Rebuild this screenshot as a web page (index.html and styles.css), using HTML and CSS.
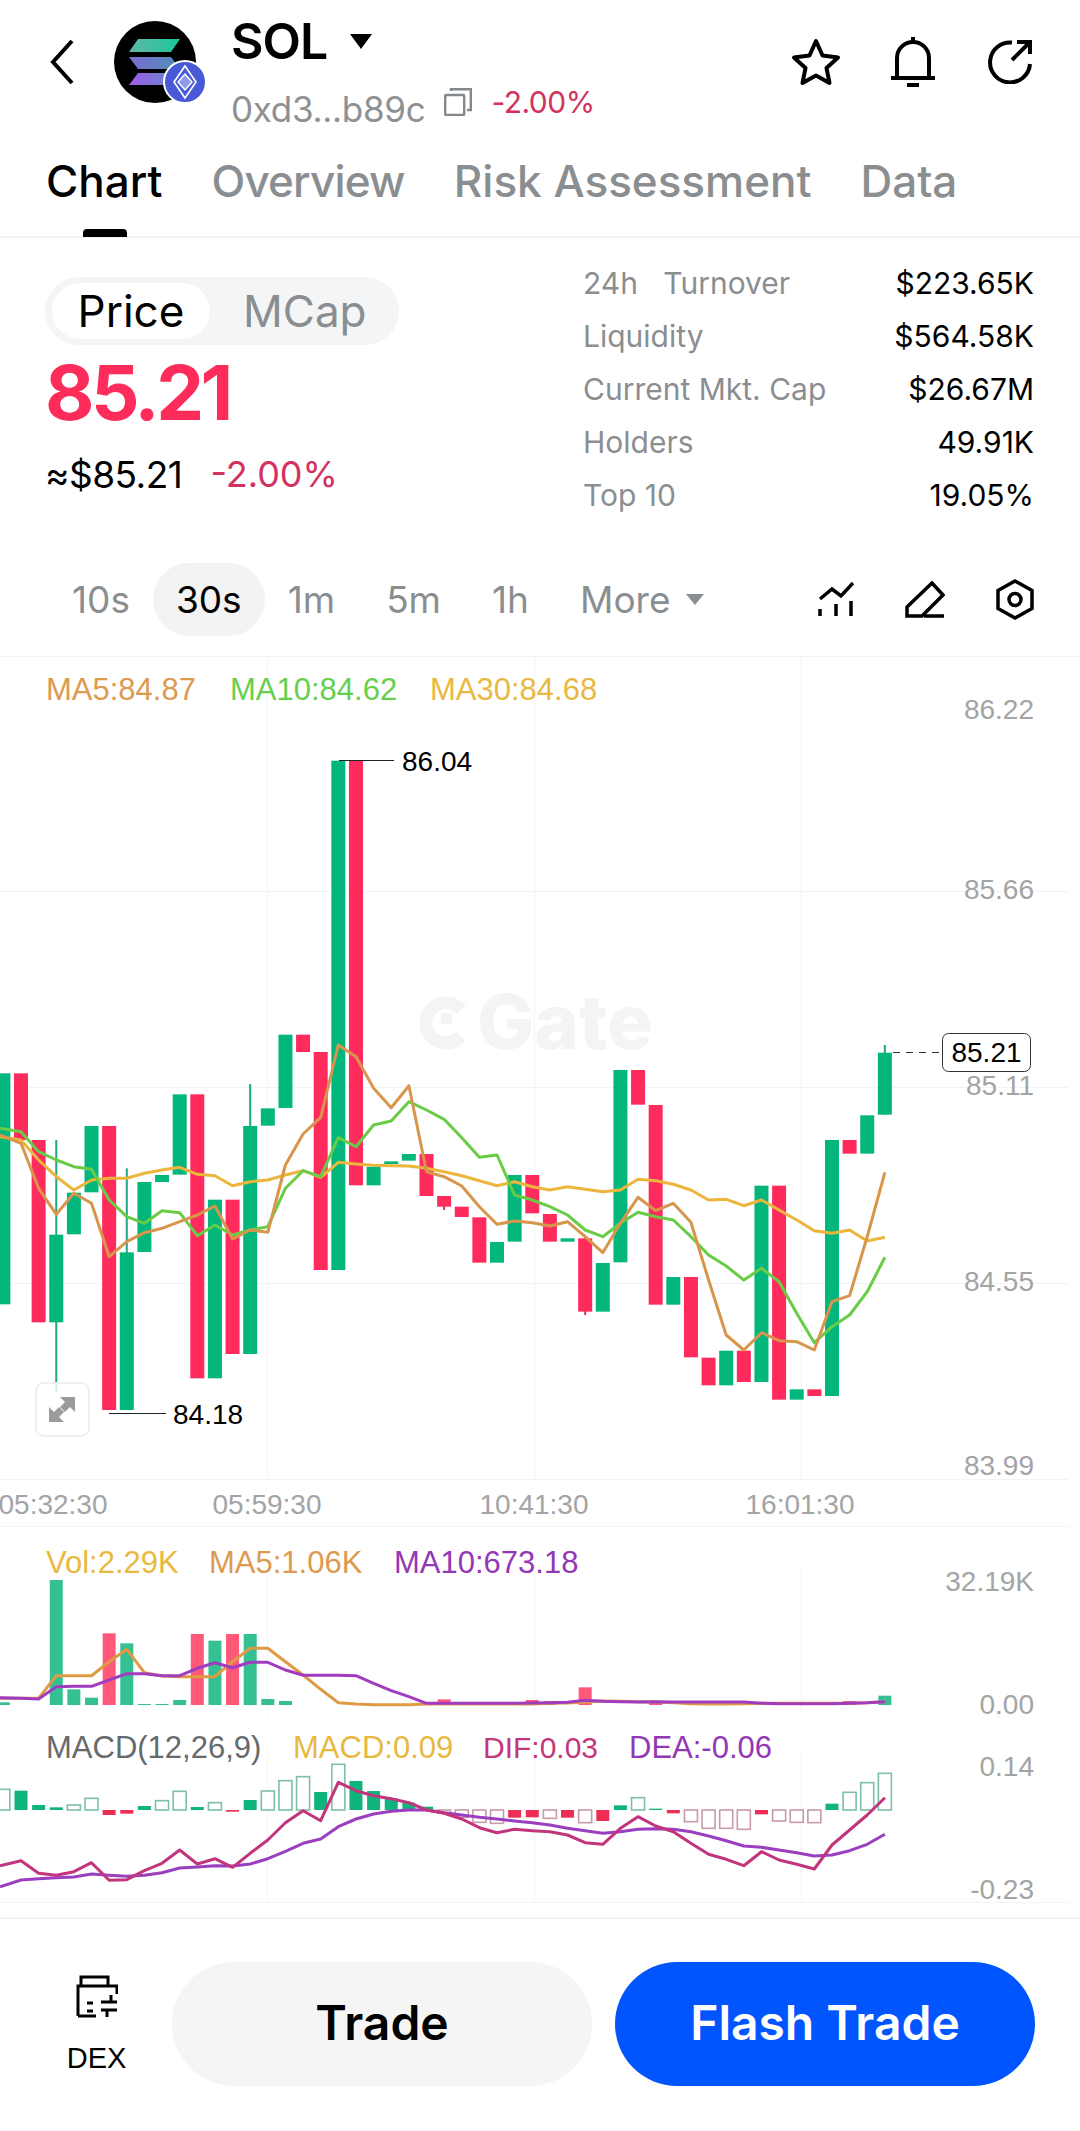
FILE: index.html
```html
<!DOCTYPE html>
<html lang="en">
<head>
<meta charset="utf-8">
<title>SOL Chart</title>
<link rel="stylesheet" href="styles.css">
</head>
<body>
<div class="app">
  <header class="header">
    <svg class="back" viewBox="0 0 24 46"><path d="M22 2 L3 23 L22 44"/></svg>
    <div class="logo">
      <svg class="sol" viewBox="0 0 82 82">
        <defs>
          <linearGradient id="solA" x1="0" y1="0" x2="1" y2="0"><stop offset="0" stop-color="#5fb7a8"/><stop offset="1" stop-color="#1cc79d"/></linearGradient>
          <linearGradient id="solB" x1="0" y1="0" x2="1" y2="0"><stop offset="0" stop-color="#7d6bd0"/><stop offset="1" stop-color="#4d8fb8"/></linearGradient>
          <linearGradient id="solC" x1="0" y1="0" x2="1" y2="0"><stop offset="0" stop-color="#a15be8"/><stop offset="1" stop-color="#5a8fc8"/></linearGradient>
        </defs>
        <circle cx="41" cy="41" r="41" fill="#000"/>
        <path d="M24 18 H66 L57 31 H15 Z" fill="url(#solA)"/>
        <path d="M15 36 H57 L66 48 H24 Z" fill="url(#solB)"/>
        <path d="M24 52 H66 L57 64 H15 Z" fill="url(#solC)"/>
      </svg>
      <svg class="eth" viewBox="0 0 44 44">
        <circle cx="22" cy="22" r="21" fill="#4a5ad6" stroke="#fff" stroke-width="2"/>
        <path d="M22 6 L33 22 L22 38 L11 22 Z" fill="none" stroke="#fff" stroke-width="1.6"/>
        <path d="M22 14 L29 22 L22 30 L15 22 Z" fill="#8f9ae8" stroke="#fff" stroke-width="1.4"/>
      </svg>
    </div>
    <div class="title">
      <div class="symbol"><span>SOL</span><i class="caret-big"></i></div>
      <div class="meta">
        <span class="addr">0xd3...b89c</span>
        <svg class="copy" viewBox="0 0 28 28"><rect x="1.2" y="7" width="19" height="20" rx="1"/><path d="M7 3 V1.2 H26.8 V22 H23"/></svg>
        <span class="pct-small">-2.00%</span>
      </div>
    </div>
    <div class="actions">
      <svg class="ic-star" viewBox="0 0 50 48"><path d="M25 3 L31.5 17.5 L47 19.5 L35.5 30 L38.5 45 L25 37.5 L11.5 45 L14.5 30 L3 19.5 L18.5 17.5 Z"/></svg>
      <svg class="ic-bell" viewBox="0 0 44 50"><path d="M22 0 V5 M6 41 V21 a16 16 0 0 1 32 0 V41 M0 41 H44 M16 48 H28"/></svg>
      <svg class="ic-share" viewBox="0 0 44 44"><path d="M24 2.5 A20 20 0 1 0 42 24 M24 20 L41 3 M29 2 H42 V14"/></svg>
    </div>
  </header>

  <nav class="tabs">
    <span class="tab active">Chart</span>
    <span class="tab tight">Overview</span>
    <span class="tab">Risk Assessment</span>
    <span class="tab">Data</span>
  </nav>

  <section class="summary">
    <div class="quote">
      <div class="toggle"><span class="opt on">Price</span><span class="opt">MCap</span></div>
      <div class="big">85.21</div>
      <div class="sub"><span class="usd">≈$85.21</span><span class="pct">-2.00%</span></div>
    </div>
    <dl class="stats">
      <div class="row"><dt>24h&nbsp;&nbsp; Turnover</dt><dd>$223.65K</dd></div>
      <div class="row"><dt>Liquidity</dt><dd>$564.58K</dd></div>
      <div class="row"><dt>Current Mkt. Cap</dt><dd>$26.67M</dd></div>
      <div class="row"><dt>Holders</dt><dd>49.91K</dd></div>
      <div class="row"><dt>Top 10</dt><dd>19.05%</dd></div>
    </dl>
  </section>

  <div class="timebar">
    <span class="tf">10s</span>
    <span class="tf sel">30s</span>
    <span class="tf">1m</span>
    <span class="tf spaced">5m</span>
    <span class="tf spaced">1h</span>
    <span class="tf spaced more">More<i class="caret-small"></i></span>
    <div class="tools">
      <svg class="tool-a" viewBox="0 0 36 35"><path d="M2 17 L14 7 L23 14 L35 1 M2 27 V34 M18 22 V34 M33 19 V34"/></svg>
      <svg class="tool-b" viewBox="0 0 40 37"><path d="M2 35 V26 L27 2 L38 14 L17 35 Z M19 35 H39"/></svg>
      <svg class="tool-c" viewBox="0 0 38 41"><path d="M19 2 L36 11.5 V29.5 L19 39 L2 29.5 V11.5 Z"/><circle cx="19" cy="20.5" r="6"/></svg>
    </div>
  </div>

  <div class="chart">
    <svg class="canvas" viewBox="0 656 1080 1261">
      <g class="grid">
        <path d="M0 656.5 H1080"/>
        <path d="M0 891.5 H1068 M0 1087.5 H1068 M0 1283.5 H1068 M0 1479.5 H1068 M0 1526.5 H1068 M0 1902.5 H1068"/>
        <path d="M267.5 656 V1479 M534.5 656 V1479 M801.5 656 V1479"/>
        <path d="M267.5 1568 V1715 M534.5 1568 V1715 M801.5 1568 V1715 M267.5 1753 V1902 M534.5 1753 V1902 M801.5 1753 V1902"/>
      </g>
      <g class="watermark">
        <path class="wm-ring" d="M461 1010 A20 20 0 1 0 461 1036"/>
        <rect x="441" y="1013" width="11" height="11"/>
        <text x="477" y="1049">Gate</text>
      </g>
      <g id="candles"></g>
      <g id="lines"></g>
      <g id="volume"></g>
      <g id="macd"></g>

      <g class="legend">
        <text class="c-ma5" x="46" y="700">MA5:84.87</text>
        <text class="c-ma10" x="230" y="700">MA10:84.62</text>
        <text class="c-ma30" x="430" y="700">MA30:84.68</text>
        <text class="c-ma30" x="46" y="1573">Vol:2.29K</text>
        <text class="c-ma5" x="209" y="1573">MA5:1.06K</text>
        <text class="c-pur" x="394" y="1573">MA10:673.18</text>
        <text class="c-grey" x="46" y="1758">MACD(12,26,9)</text>
        <text class="c-ma30" x="293" y="1758">MACD:0.09</text>
        <text class="c-dif" x="483" y="1758">DIF:0.03</text>
        <text class="c-pur" x="629" y="1758">DEA:-0.06</text>
      </g>

      <g class="axis right">
        <text x="1034" y="719">86.22</text>
        <text x="1034" y="899">85.66</text>
        <text x="1034" y="1095">85.11</text>
        <text x="1034" y="1291">84.55</text>
        <text x="1034" y="1475">83.99</text>
        <text x="1034" y="1591">32.19K</text>
        <text x="1034" y="1714">0.00</text>
        <text x="1034" y="1776">0.14</text>
        <text x="1034" y="1899">-0.23</text>
      </g>
      <g class="axis mid">
        <text x="53" y="1514">05:32:30</text>
        <text x="267" y="1514">05:59:30</text>
        <text x="534" y="1514">10:41:30</text>
        <text x="800" y="1514">16:01:30</text>
      </g>

      <g class="marks">
        <path class="lead" d="M339 760.5 H394 M109 1413.5 H166"/>
        <path class="dash" d="M893 1052.5 H942"/>
        <text x="402" y="771">86.04</text>
        <text x="173" y="1424">84.18</text>
        <rect class="pricebox" x="942.5" y="1033.5" width="88" height="38" rx="6"/>
        <text class="boxt" x="986.5" y="1062">85.21</text>
      </g>

      <g class="expand">
        <rect x="36" y="1383" width="53" height="53" rx="8"/>
        <path d="M60 1397 H75 V1412 L70 1407 L65 1412 L60 1407 L65 1402 Z M64 1422 H49 V1407 L54 1412 L59 1407 L64 1412 L59 1417 Z"/>
      </g>
    </svg>
  </div>

  <footer class="footer">
    <div class="dex">
      <svg viewBox="0 0 42 43"><path d="M5 11 V2 H32 V11 M2 41 V11 H41 V19 M2 41 H20 M11 28 H17 M11 36 H17 M25 27 H41 M35 20 V27 M25 35 H41 M31 35 V42"/></svg>
      <span>DEX</span>
    </div>
    <button class="btn ghost">Trade</button>
    <button class="btn primary">Flash Trade</button>
  </footer>
</div>
<script src="chart.js"></script>
</body>
</html>
```

FILE: styles.css
```css
* { box-sizing: border-box; }
html, body { margin: 0; padding: 0; background: #fff; }
body { font-family: Inter, "Liberation Sans", sans-serif; color: #000; }
.app { width: 1080px; height: 2131px; overflow: hidden; display: flex; flex-direction: column; }

/* header */
.header { height: 124px; flex: none; display: flex; align-items: center; padding: 0 48px 0 50px; }
.back { width: 24px; height: 46px; flex: none; }
.back path { fill: none; stroke: #000; stroke-width: 4; }
.logo { width: 92px; height: 82px; margin-left: 40px; flex: none; position: relative; }
.sol { width: 82px; height: 82px; display: block; }
.eth { position: absolute; left: 49px; top: 39px; width: 44px; height: 44px; }
.title { align-self: flex-start; margin: 11px 0 0 25px; }
.symbol { display: flex; align-items: center; height: 60px; font-size: 50px; font-weight: 600; letter-spacing: -1px; }
.caret-big { width: 0; height: 0; margin: 0 0 0 23px; border-left: 11px solid transparent; border-right: 11px solid transparent; border-top: 15px solid #000; }
.meta { display: flex; align-items: center; height: 50px; margin-top: 6px; }
.addr { font-size: 35px; color: #8e9192; letter-spacing: -.3px; margin-top: 14px; }
.copy { width: 28px; height: 28px; margin: 0 0 0 19px; flex: none; }
.copy rect, .copy path { fill: none; stroke: #85888a; stroke-width: 2.4; }
.pct-small { margin: 0 0 0 19px; font-size: 30px; color: #d2325f; letter-spacing: -.5px; }
.actions { margin-left: auto; display: flex; align-items: center; gap: 50px; }
.actions svg { display: block; fill: none; stroke: #000; }
.ic-star { width: 50px; height: 48px; stroke-width: 4; stroke-linejoin: round; }
.ic-bell { width: 44px; height: 50px; stroke-width: 4; }
.ic-share { width: 44px; height: 44px; stroke-width: 4; margin-left: 3px; }

/* tabs */
.tabs { height: 114px; flex: none; display: flex; gap: 49px; padding: 27px 0 0 46px; border-bottom: 2px solid #f2f3f3; }
.tab { font-size: 44px; font-weight: 500; line-height: 60px; color: #8b8e90; height: 60px; }
.tab.tight { letter-spacing: -.8px; }
.tab.active { color: #000; position: relative; }
.tab.active::after { content: ""; position: absolute; left: 37px; top: 78px; width: 44px; height: 8px; border-radius: 4px 4px 0 0; background: #000; }

/* summary */
.summary { height: 325px; flex: none; display: flex; justify-content: space-between; padding: 0 46px 0 45px; }
.quote { padding-top: 39px; }
.toggle { width: 354px; height: 68px; border-radius: 34px; background: #f3f5f6; padding: 6px 0 6px 7px; display: flex; align-items: center; font-size: 44px; color: #8a8e90; }
.opt { height: 56px; line-height: 56px; }
.opt.on { width: 158px; text-align: center; background: #fff; border-radius: 28px; color: #000; margin-right: 33px; }
.big { margin: 7px 0 0; height: 80px; line-height: 80px; font-size: 76px; font-weight: 700; color: #fe2c5b; letter-spacing: -3.5px; }
.sub { margin: 17px 0 0; height: 50px; display: flex; align-items: center; gap: 28px; font-size: 36px; }
.usd { font-size: 37px; letter-spacing: -.5px; }
.pct { color: #d2325f; }
.stats { margin: 19px 0 0; width: 451px; }
.row { display: flex; justify-content: space-between; height: 53px; line-height: 53px; font-size: 30px; }
.row dt { color: #8b8e90; }
.row dd { margin: 0; color: #000; }

/* timebar */
.timebar { height: 93px; flex: none; display: flex; align-items: flex-start; padding: 0 46px 0 49px; font-size: 37px; color: #8b8e90; }
.tf { height: 73px; line-height: 73px; padding: 0 23px; border-radius: 37px; }
.tf.sel { background: #f3f3f3; color: #000; }
.tf.spaced { margin-left: 5px; }
.more { display: flex; align-items: center; }
.caret-small { width: 0; height: 0; margin-left: 16px; border-left: 9px solid transparent; border-right: 9px solid transparent; border-top: 11px solid #8b8e90; }
.tools { margin-left: auto; display: flex; align-items: center; gap: 51px; height: 73px; }
.tools svg { display: block; fill: none; stroke: #000; stroke-width: 3.5; }
.tool-a { width: 36px; height: 35px; }
.tool-b { width: 40px; height: 37px; }
.tool-c { width: 38px; height: 41px; }

/* chart */
.chart { height: 1261px; flex: none; }
.canvas { display: block; width: 1080px; height: 1261px; font-family: "Liberation Sans", Arial, sans-serif; }
.grid path { fill: none; stroke: #f2f3f4; stroke-width: 1; }
.watermark { fill: #f3f5f5; }
.watermark text { font-family: Inter, sans-serif; font-size: 76px; font-weight: 800; }
.wm-ring { fill: none; stroke: #f3f5f5; stroke-width: 13; }
.legend text { font-size: 31px; }
.legend .c-dif { font-size: 30px; }
.c-ma5 { fill: #dd9a4f; }
.c-ma10 { fill: #66cf4e; }
.c-ma30 { fill: #e9b93f; }
.c-pur { fill: #9338b4; }
.c-grey { fill: #666a6c; }
.c-dif { fill: #c4377c; }
.axis text { font-size: 28px; fill: #a2a4a5; }
.axis.right text { text-anchor: end; }
.axis.mid text { text-anchor: middle; }
.marks text { font-size: 28px; fill: #000; }
.marks .boxt { text-anchor: middle; }
.lead { fill: none; stroke: #222; stroke-width: 1; }
.dash { fill: none; stroke: #333; stroke-width: 1; stroke-dasharray: 7 6; }
.pricebox { fill: #fff; stroke: #333; stroke-width: 1; }
.expand rect { fill: #fff; fill-opacity: .8; stroke: #efefef; stroke-width: 2; }
.expand path { fill: #9b9b9b; }

/* candles and indicator series */
.up { fill: #03b67c; }
.down { fill: #ff2b5c; }
.wick { stroke: #20a585; stroke-width: 2; }
.wick.red { stroke: #d8355f; }
.ln { fill: none; stroke-width: 3; stroke-linejoin: round; }
.ln-ma5 { stroke: #d8964c; }
.ln-ma10 { stroke: #69cc46; }
.ln-ma30 { stroke: #ecb53b; }
.ln-vol { stroke: #a13cc0; }
.ln-volma { stroke: #e09a45; }
.ln-dif { stroke: #c2357d; }
.ln-dea { stroke: #9a3fc0; }
.vol-up { fill: #34c092; }
.vol-down { fill: #ff5878; }
.m-up { fill: #0fb37d; }
.m-down { fill: #ee2d55; }
.m-up-h { fill: #fff; fill-opacity: .7; stroke: #7cbfa9; stroke-width: 1.6; }
.m-down-h { fill: #fff; fill-opacity: .7; stroke: #c89aa8; stroke-width: 1.6; }

/* footer */
.footer { flex: 1; border-top: 2px solid #f2f3f3; display: flex; align-items: flex-start; padding: 43px 45px 0 67px; }
.dex { width: 59px; margin-right: 46px; display: flex; flex-direction: column; align-items: center; padding-top: 13px; font-family: "Liberation Sans", sans-serif; font-size: 29px; line-height: 34px; }
.dex svg { display: block; width: 42px; height: 43px; margin-bottom: 23px; fill: none; stroke: #000; stroke-width: 3; }
.btn { width: 420px; height: 124px; border: 0; border-radius: 62px; font-family: Inter, sans-serif; font-size: 48px; font-weight: 600; padding: 0 0 3px; }
.ghost { background: #f5f5f5; color: #000; margin-right: 23px; }
.primary { background: #0055ff; color: #fff; }
```

FILE: chart.js
```js
// Series are sampled at candle centres. Values are in third-pixels from a pane origin.
var NS = 'http://www.w3.org/2000/svg';
function cx(i) { return 3.37 + 17.63 * i; }
function py(v) { return 1060 + v / 3; }   // price pane
function ly(v) { return 1520 + v / 3; }   // lower panes

function add(parent, name, attrs) {
  var el = document.createElementNS(NS, name);
  for (var k in attrs) el.setAttribute(k, attrs[k]);
  parent.appendChild(el);
  return el;
}
function series(parent, cls, vals, fy) {
  var pts = vals.map(function (v, i) { return cx(i).toFixed(1) + ',' + fy(v).toFixed(1); });
  pts[0] = '0,' + fy(vals[0]).toFixed(1);
  add(parent, 'polyline', { 'class': 'ln ' + cls, points: pts.join(' ') });
}

// [direction, top, bottom, wickTop, wickBottom]
var candles = [
  ['u',40,733],['d',40,240],['d',240,787],['u',524,787,240,995],['u',398,523],['u',198,397],
  ['d',198,1050],['u',577,1050,325],['u',366,576],['u',345,366],['u',103,344],['d',103,955],
  ['u',419,955],['d',419,882],['u',198,882,72],['u',145,197],['u',-76,144],['d',-76,-24],
  ['d',-24,630],['u',-898,630],['d',-898,376],['u',320,376],['u',304,312],['u',282,302],
  ['d',282,408],['d',408,440,null,450],['d',440,471],['d',472,608],['u',546,608],['u',345,545],
  ['d',345,460],['d',462,545],['u',535,545],['d',535,755,null,765],['u',609,755],['u',30,607],
  ['d',30,134],['d',135,734],['u',651,734],['d',651,892],['d',893,976],['u',872,976],
  ['d',872,966],['u',377,966],['d',377,1019],['u',988,1019],['d',988,1008],['u',240,1008],
  ['d',240,281],['u',166,281],['u',-22,164,-45]
];

var ma5 = [225,250,385,463,400,430,590,545,518,505,485,465,438,537,510,517,315,222,172,-45,-10,85,143,77,335,350,378,440,493,483,488,
           498,485,530,578,490,412,452,430,487,660,825,870,818,842,845,870,725,707,530,337];
var ma10 = [205,215,275,300,320,328,420,470,490,452,458,527,495,525,510,500,385,332,350,233,260,195,183,125,150,178,233,292,285,405,420,
            440,465,510,530,490,457,470,480,530,585,618,660,625,665,760,848,800,765,695,592];
var ma30 = [230,240,300,350,390,360,355,355,340,330,322,343,347,377,365,360,345,332,352,307,312,316,317,318,325,335,347,362,377,365,380,
            390,380,388,395,390,358,362,373,390,420,418,437,420,450,480,512,520,510,543,532];

var cGroup = document.getElementById('candles');
candles.forEach(function (c, i) {
  var x = cx(i), top = py(c[1]), bottom = py(c[2]);
  if (c[3] != null || c[4] != null) {
    add(cGroup, 'line', {
      'class': 'wick' + (c[0] === 'd' ? ' red' : ''), x1: x, x2: x,
      y1: c[3] != null ? py(c[3]) : top, y2: c[4] != null ? py(c[4]) : bottom
    });
  }
  add(cGroup, 'rect', { 'class': c[0] === 'u' ? 'up' : 'down', x: x - 7, y: top, width: 14, height: bottom - top });
});

var lGroup = document.getElementById('lines');
series(lGroup, 'ln-ma30', ma30, py);
series(lGroup, 'ln-ma10', ma10, py);
series(lGroup, 'ln-ma5', ma5, py);

// volume: [index, direction, top]
var vols = [[0,'u',547],[3,'u',180],[4,'u',508],[5,'u',533],[6,'d',340],[7,'u',370],[8,'u',552],[9,'u',552],[10,'u',540],
  [11,'d',342],[12,'u',362],[13,'d',342],[14,'u',342],[15,'u',537],[16,'u',543],[25,'d',538],[30,'d',540],[31,'d',543],
  [33,'d',502],[37,'d',543],[48,'d',543],[50,'u',527]];
var vGroup = document.getElementById('volume');
vols.forEach(function (v) {
  add(vGroup, 'rect', { 'class': v[1] === 'u' ? 'vol-up' : 'vol-down', x: cx(v[0]) - 6.5, y: ly(v[2]), width: 13, height: ly(555) - ly(v[2]) });
});
var volMa5 = [535,535,535,467,467,467,425,388,458,468,470,470,470,425,385,385,425,465,508,548,552,554,554,554,552,552,552,552,552,552,
              552,550,549,546,543,544,545,546,548,551,552,552,551,550,550,550,550,550,550,548,545];
var volMa10 = [533,535,537,500,499,499,480,461,461,467,467,445,428,443,427,427,450,466,466,466,467,490,512,530,550,550,550,550,550,550,
               549,548,547,541,544,545,546,545,546,546,546,546,546,550,551,551,551,551,550,548,545];
series(vGroup, 'ln-volma', volMa5, ly);
series(vGroup, 'ln-vol', volMa10, ly);

// MACD: [direction + hollow, end value]; the baseline is 870
var bars = [
  ['uh',808],['u',812],['u',855],['u',862],['uh',855],['uh',835],['d',885],['d',881],['u',858],['uh',842],
  ['uh',814],['u',861],['uh',848],['d',875],['u',840],['uh',813],['uh',782],['uh',770],['u',816],['uh',733],
  ['u',783],['u',813],['u',835],['u',848],['u',860],['dh',878],['dh',892],['dh',907],['dh',910],['d',893],
  ['d',892],['dh',895],['d',893],['dh',908],['d',903],['u',856],['uh',833],['u',866],['d',880],['dh',905],
  ['dh',925],['dh',925],['dh',928],['d',883],['dh',903],['dh',907],['dh',908],['u',851],['uh',817],['uh',788],['uh',760]
];
var mGroup = document.getElementById('macd');
bars.forEach(function (b, i) {
  var a = ly(Math.min(870, b[1])), z = ly(Math.max(870, b[1]));
  var cls = { u: 'm-up', d: 'm-down', uh: 'm-up-h', dh: 'm-down-h' }[b[0]];
  add(mGroup, 'rect', { 'class': cls, x: cx(i) - 6.5, y: a, width: 13, height: z - a });
});
var dif = [1037,1022,1060,1066,1055,1028,1081,1079,1052,1030,990,1032,1016,1042,1000,960,908,872,902,787,812,827,836,848,870,880,897,923,938,928,932,
           935,945,968,973,925,890,918,935,970,1003,1018,1037,995,1020,1033,1047,975,930,885,833];
var dea = [1100,1080,1076,1073,1071,1062,1066,1069,1066,1058,1044,1041,1037,1038,1032,1016,994,970,957,920,897,882,874,870,870,878,885,892,897,903,908,
           915,925,932,940,935,928,926,928,935,948,962,978,982,990,998,1008,1005,992,973,943];
series(mGroup, 'ln-dea', dea, ly);
series(mGroup, 'ln-dif', dif, ly);
```
